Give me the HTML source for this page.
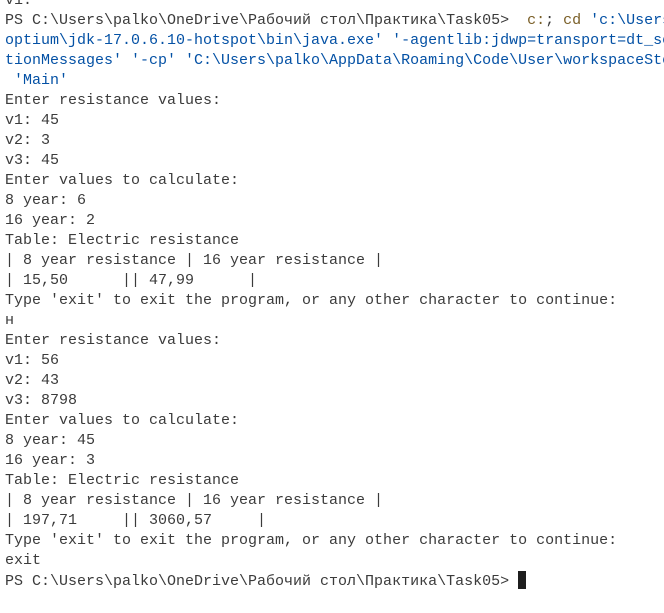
<!DOCTYPE html>
<html><head><meta charset="utf-8"><style>
html,body{margin:0;padding:0;background:#fff;width:664px;height:613px;overflow:hidden;position:relative}
pre{margin:0;position:absolute;left:5px;top:-9px;width:659px;height:620px;overflow:hidden;font-family:"Liberation Mono","DejaVu Sans Mono",monospace;font-size:15px;line-height:20px;color:#3b3b3b;white-space:pre}
.y{color:#795e26}.b{color:#0451a5}
.cur{display:inline-block;width:8px;height:18px;background:#1e1e1e;vertical-align:-4px}
</style></head><body><pre>v1:
PS C:\Users\palko\OneDrive\Рабочий стол\Практика\Task05>  <span class="y">c:</span>; <span class="y">cd</span> <span class="b">'c:\Users\palko'</span>
<span class="b">optium\jdk-17.0.6.10-hotspot\bin\java.exe' '-agentlib:jdwp=transport=dt_socket'</span>
<span class="b">tionMessages' '-cp' 'C:\Users\palko\AppData\Roaming\Code\User\workspaceStorage'</span>
 <span class="b">'Main'</span>
Enter resistance values:
v1: 45
v2: 3
v3: 45
Enter values to calculate:
8 year: 6
16 year: 2
Table: Electric resistance
| 8 year resistance | 16 year resistance |
| 15,50      || 47,99      |
Type 'exit' to exit the program, or any other character to continue:
н
Enter resistance values:
v1: 56
v2: 43
v3: 8798
Enter values to calculate:
8 year: 45
16 year: 3
Table: Electric resistance
| 8 year resistance | 16 year resistance |
| 197,71     || 3060,57     |
Type 'exit' to exit the program, or any other character to continue:
exit
PS C:\Users\palko\OneDrive\Рабочий стол\Практика\Task05> <span class="cur"></span></pre></body></html>
